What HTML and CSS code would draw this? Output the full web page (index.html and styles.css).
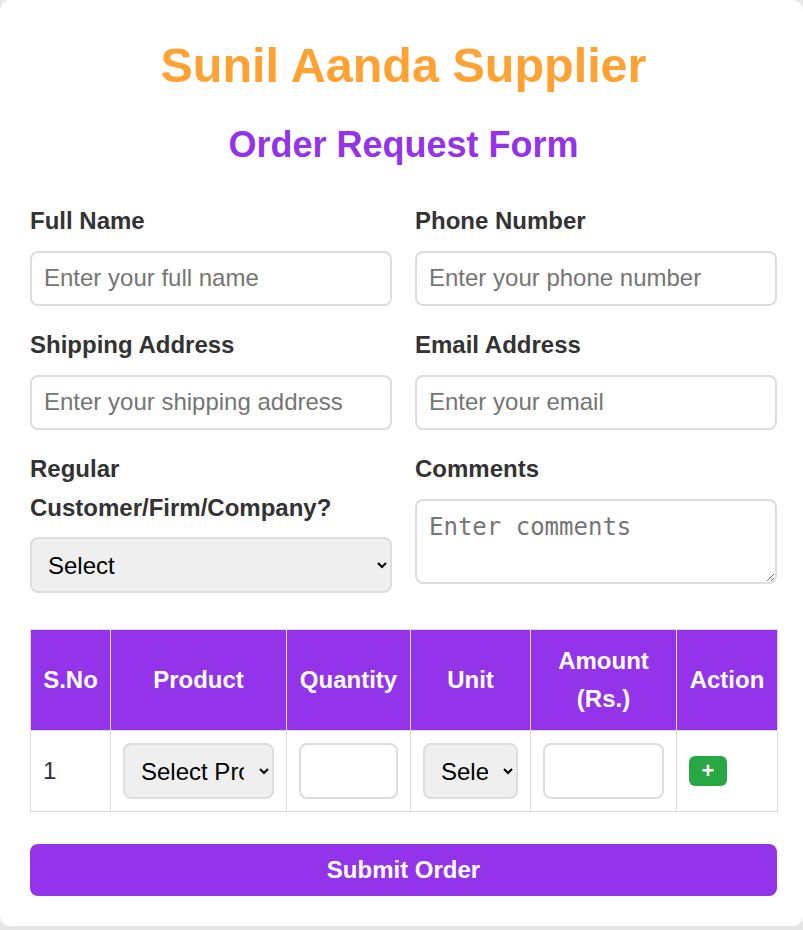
FILE: index.html
```html
<!DOCTYPE html>
<html lang="en">
<head>
<meta charset="utf-8">
<title>Order Request Form</title>
<link rel="stylesheet" href="styles.css">
</head>
<body>
<div class="card">
  <h1 class="title">Sunil Aanda Supplier</h1>
  <h2 class="subtitle">Order Request Form</h2>
  <form class="form">
    <div class="grid">
      <div class="group">
        <label class="label">Full Name</label>
        <input class="field" type="text" placeholder="Enter your full name">
      </div>
      <div class="group">
        <label class="label">Phone Number</label>
        <input class="field" type="text" placeholder="Enter your phone number">
      </div>
      <div class="group">
        <label class="label">Shipping Address</label>
        <input class="field" type="text" placeholder="Enter your shipping address">
      </div>
      <div class="group">
        <label class="label">Email Address</label>
        <input class="field" type="text" placeholder="Enter your email">
      </div>
      <div class="group">
        <label class="label">Regular Customer/Firm/Company?</label>
        <select class="field select"><option>Select</option></select>
      </div>
      <div class="group">
        <label class="label">Comments</label>
        <textarea class="field area" rows="2" placeholder="Enter comments"></textarea>
      </div>
    </div>
    <table class="table">
      <colgroup>
        <col class="c1"><col class="c2"><col class="c3"><col class="c4"><col class="c5"><col class="c6">
      </colgroup>
      <thead>
        <tr><th>S.No</th><th>Product</th><th>Quantity</th><th>Unit</th><th>Amount (Rs.)</th><th>Action</th></tr>
      </thead>
      <tbody>
        <tr>
          <td>1</td>
          <td><select class="field select"><option>Select Product</option></select></td>
          <td><input class="field" type="text"></td>
          <td><select class="field select"><option>Select</option></select></td>
          <td><input class="field" type="text"></td>
          <td><button type="button" class="add">+</button></td>
        </tr>
      </tbody>
    </table>
    <button type="button" class="submit">Submit Order</button>
  </form>
</div>
</body>
</html>
```
FILE: styles.css
```css
html, body {
  margin: 0;
  padding: 0;
}
body {
  background: #e6e6e6;
  font-family: "Liberation Sans", Arial, sans-serif;
  font-size: 24px;
  line-height: 1.6;
  color: #333;
}
.card {
  width: 803px;
  box-sizing: border-box;
  background: #fff;
  border-radius: 10px;
  padding: 27px 26px 30px 30px;
}
.title {
  margin: 0;
  text-align: center;
  font-size: 48.5px;
  color: #ffa233;
  line-height: 1.6;
}
.subtitle {
  margin: 11px 0 0;
  text-align: center;
  font-size: 36px;
  color: #9333ea;
  line-height: 1.6;
}
.form {
  margin-top: 29px;
}
.grid {
  display: grid;
  grid-template-columns: 1fr 1fr;
  column-gap: 23px;
}
.group {
  margin-bottom: 20px;
}
.label {
  display: block;
  font-weight: bold;
  margin-bottom: 10px;
}
.field {
  display: block;
  width: 100%;
  box-sizing: border-box;
  height: 55.6px;
  padding: 12px;
  border: 2px solid #ddd;
  border-radius: 8px;
  font-family: "Liberation Sans", Arial, sans-serif;
  font-size: 24px;
  color: #000;
  background: #fff;
  margin: 0;
}
.field::placeholder {
  color: #757575;
}
.select {
  background-color: #efefef;
}
.area {
  height: 85px;
  font-family: "DejaVu Sans Mono", monospace;
  line-height: normal;
  resize: vertical;
}
.table {
  width: 100%;
  border-collapse: collapse;
  table-layout: fixed;
  margin-top: 16px;
  margin-bottom: 32px;
}
.c1 { width: 80px; }
.c2 { width: 176px; }
.c3 { width: 124px; }
.c4 { width: 120px; }
.c5 { width: 146px; }
.c6 { width: 101px; }
.table th, .table td {
  border: 1px solid #ddd;
  padding: 12px;
}
.table th {
  background: #9333ea;
  color: #fff;
  font-weight: bold;
  text-align: center;
}
.table td {
  text-align: left;
}
.add {
  display: block;
  width: 38px;
  height: 30px;
  padding: 0;
  border: none;
  border-radius: 6px;
  background: #28a745;
  color: #fff;
  font-family: "Liberation Sans", Arial, sans-serif;
  font-weight: bold;
  font-size: 22px;
  line-height: 30px;
}
.submit {
  display: block;
  width: 100%;
  padding: 12px;
  border: none;
  border-radius: 8px;
  background: #9333ea;
  color: #fff;
  font-family: "Liberation Sans", Arial, sans-serif;
  font-weight: bold;
  font-size: 24px;
  line-height: normal;
}
```
